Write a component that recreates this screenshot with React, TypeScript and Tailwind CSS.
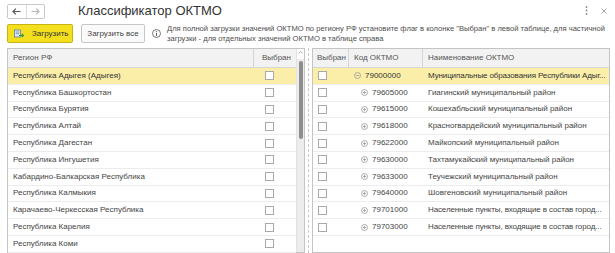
import React from "react"

const regions = [
  "Республика Адыгея (Адыгея)",
  "Республика Башкортостан",
  "Республика Бурятия",
  "Республика Алтай",
  "Республика Дагестан",
  "Республика Ингушетия",
  "Кабардино-Балкарская Республика",
  "Республика Калмыкия",
  "Карачаево-Черкесская Республика",
  "Республика Карелия",
  "Республика Коми",
]

const oktmo = [
  { code: "79000000", name: "Муниципальные образования Республики Адыг...", root: true },
  { code: "79605000", name: "Гиагинский муниципальный район" },
  { code: "79615000", name: "Кошехабльский муниципальный район" },
  { code: "79618000", name: "Красногвардейский муниципальный район" },
  { code: "79622000", name: "Майкопский муниципальный район" },
  { code: "79630000", name: "Тахтамукайский муниципальный район" },
  { code: "79633000", name: "Теучежский муниципальный район" },
  { code: "79640000", name: "Шовгеновский муниципальный район" },
  { code: "79701000", name: "Населенные пункты, входящие в состав город..." },
  { code: "79703000", name: "Населенные пункты, входящие в состав город..." },
]

const Checkbox = () => <div className="w-[9px] h-[9px] border border-[#a9a9a9] bg-white" />

const TreeIcon = ({ open }: { open?: boolean }) => (
  <svg width="7" height="7" viewBox="0 0 7 7" className="shrink-0">
    <circle cx="3.5" cy="3.5" r="3" fill="none" stroke="#9a9a9a" strokeWidth="0.8" />
    <line x1="1.8" y1="3.5" x2="5.2" y2="3.5" stroke="#9a9a9a" strokeWidth="0.8" />
    {!open && <line x1="3.5" y1="1.8" x2="3.5" y2="5.2" stroke="#9a9a9a" strokeWidth="0.8" />}
  </svg>
)

const LoadIcon = () => (
  <svg width="10" height="10" viewBox="0 0 10 10">
    <rect x="0.5" y="1" width="6" height="7" fill="#dfe8f2" stroke="#5b7fa6" strokeWidth="0.8" />
    <line x1="1.8" y1="3" x2="5.2" y2="3" stroke="#5b7fa6" strokeWidth="0.7" />
    <line x1="1.8" y1="4.6" x2="5.2" y2="4.6" stroke="#5b7fa6" strokeWidth="0.7" />
    <path d="M5 6.5 H9.5 M7.8 4.8 L9.5 6.5 L7.8 8.2" fill="none" stroke="#2e9a3a" strokeWidth="1.2" />
  </svg>
)

export default function App() {
  return (
    <div className="w-[615px] h-[253px] overflow-hidden bg-white text-[#4a4a4a] font-['Liberation_Sans',Arial,sans-serif] flex flex-col">
      {/* title bar */}
      <div className="h-[21px] flex items-center shrink-0">
        <div className="ml-[7px] mt-[1px] w-[38px] h-[15px] border border-[#c9c9c9] rounded-[2px] flex">
          <div className="flex-1 flex items-center justify-center border-r border-[#dcdcdc]">
            <svg width="9" height="7" viewBox="0 0 9 7">
              <path d="M8.5 3.5 H1 M3.8 0.7 L1 3.5 L3.8 6.3" fill="none" stroke="#555" strokeWidth="1.2" />
            </svg>
          </div>
          <div className="flex-1 flex items-center justify-center">
            <svg width="9" height="7" viewBox="0 0 9 7">
              <path d="M0.5 3.5 H8 M5.2 0.7 L8 3.5 L5.2 6.3" fill="none" stroke="#b5b5b5" strokeWidth="1.2" />
            </svg>
          </div>
        </div>
        <div className="ml-[33px] mt-[1px] text-[13px] text-[#333]">Классификатор ОКТМО</div>
        <div className="ml-auto mr-[8px] flex items-center gap-[13px] text-[#9a9a9a]">
          <svg width="3" height="9" viewBox="0 0 3 9">
            <circle cx="1.5" cy="1" r="0.9" fill="#8a8a8a" />
            <circle cx="1.5" cy="4.5" r="0.9" fill="#8a8a8a" />
            <circle cx="1.5" cy="8" r="0.9" fill="#8a8a8a" />
          </svg>
          <svg width="6" height="6" viewBox="0 0 6 6">
            <path d="M0.5 0.5 L5.5 5.5 M5.5 0.5 L0.5 5.5" stroke="#9a9a9a" strokeWidth="0.9" />
          </svg>
        </div>
      </div>

      {/* toolbar */}
      <div className="mt-[3px] h-[19px] flex items-center shrink-0">
        <button className="ml-[7px] w-[66px] h-[19px] bg-[#f4df1e] border border-[#c8b410] rounded-[2px] flex items-center pl-[6px] gap-[8px] text-[8px] text-[#333]">
          <LoadIcon />
          <span>Загрузить</span>
        </button>
        <button className="ml-[8px] w-[64px] h-[19px] bg-[#fafafa] border border-[#c6c6c6] rounded-[2px] flex items-center justify-center text-[8px] text-[#444]">
          Загрузить все
        </button>
        <svg width="9" height="9" viewBox="0 0 9 9" className="ml-[7px]">
          <circle cx="4.5" cy="4.5" r="4" fill="none" stroke="#555" strokeWidth="0.8" />
          <circle cx="4.5" cy="2.5" r="0.6" fill="#555" />
          <line x1="4.5" y1="3.8" x2="4.5" y2="7" stroke="#555" strokeWidth="0.9" />
        </svg>
        <div className="ml-[6px] text-[7.6px] leading-[10px] text-[#4d4d4d]">
          <div>Для полной загрузки значений ОКТМО по региону РФ установите флаг в колонке "Выбран" в левой таблице, для частичной</div>
          <div>загрузки - для отдельных значений ОКТМО в таблице справа</div>
        </div>
      </div>

      {/* tables */}
      <div className="mt-[5px] ml-[7px] flex flex-1 min-h-0">
        {/* left table */}
        <div className="w-[298px] border border-[#c4c4c4] flex">
          <div className="flex-1 flex flex-col text-[8px]">
            <div className="h-[19px] shrink-0 flex bg-[#f2f2f2] border-b border-[#d6d6d6] text-[#555]">
              <div className="w-[246px] pl-[5px] flex items-center border-r border-[#d6d6d6]">Регион РФ</div>
              <div className="flex-1 pl-[8px] flex items-center">Выбран</div>
            </div>
            {regions.map((r, i) => (
              <div
                key={r}
                className={`h-[16.8px] shrink-0 flex items-center border-b border-[#ececec] ${i === 0 ? "bg-[#fbeea9] text-[#333]" : "text-[#444]"}`}
              >
                <div className="w-[246px] pl-[5px]">{r}</div>
                <div className="flex-1 pl-[11px]">
                  <Checkbox />
                </div>
              </div>
            ))}
          </div>
          {/* scrollbar */}
          <div className="w-[8px] flex flex-col border-l border-[#e2e2e2] bg-[#ececec]">
            <div className="h-[10px] bg-white flex justify-center pt-[2px]">
              <svg width="5" height="3" viewBox="0 0 5 3">
                <path d="M0.5 2.5 L2.5 0.5 L4.5 2.5" fill="none" stroke="#999" strokeWidth="0.8" />
              </svg>
            </div>
            <div className="mt-[2px] mx-auto w-[4px] h-[78px] rounded-[2px] bg-[#8d8d8d]" />
          </div>
        </div>

        {/* splitter */}
        <div className="w-[7px] flex justify-center">
          <div className="w-0 border-l border-dashed border-[#c8c8c8]" />
        </div>

        {/* right table */}
        <div className="w-[298px] border border-[#c4c4c4] flex flex-col text-[8px]">
          <div className="h-[19px] shrink-0 flex bg-[#f2f2f2] border-b border-[#d6d6d6] text-[#555]">
            <div className="w-[36px] pl-[4px] flex items-center border-r border-[#d6d6d6]">Выбран</div>
            <div className="w-[74px] pl-[5px] flex items-center border-r border-[#d6d6d6]">Код ОКТМО</div>
            <div className="flex-1 pl-[5px] flex items-center">Наименование ОКТМО</div>
          </div>
          {oktmo.map((o, i) => (
            <div
              key={o.code}
              className={`h-[16.8px] shrink-0 flex items-center border-b border-[#ececec] ${i === 0 ? "bg-[#fbeea9] text-[#333]" : "text-[#444]"}`}
            >
              <div className="w-[36px] pl-[5px]">
                <Checkbox />
              </div>
              <div className={`w-[74px] flex items-center gap-[4px] ${o.root ? "pl-[5px]" : "pl-[12px]"}`}>
                <TreeIcon open={o.root} />
                <span>{o.code}</span>
              </div>
              <div className={`flex-1 pl-[5px] whitespace-nowrap overflow-hidden ${o.name.endsWith("...") ? "tracking-[-0.12px]" : ""}`}>
                {o.name}
              </div>
            </div>
          ))}
        </div>
      </div>
    </div>
  )
}
